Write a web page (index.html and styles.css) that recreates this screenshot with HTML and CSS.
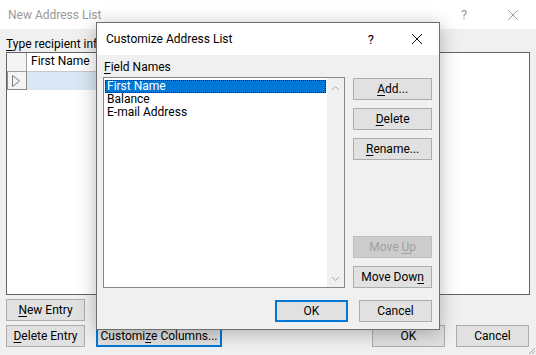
FILE: index.html
```html
<!DOCTYPE html>
<html>
<head>
<meta charset="utf-8">
<link rel="stylesheet" href="styles.css">
</head>
<body>
<div class="win">
  <div class="titlebar">
    <span class="title">New Address List</span>
    <span class="tb-help">?</span>
    <svg class="tb-close" width="12" height="12" viewBox="0 0 12 12"><path d="M1 1L11 11M11 1L1 11" stroke="#a0a0a0" stroke-width="1"/></svg>
  </div>
  <div class="content">
    <div class="label"><u>T</u>ype recipient information in the table.  To add more entries, click New Entry.</div>
    <div class="table">
      <div class="trow thead">
        <div class="rh"></div>
        <div class="cell">First Name</div>
        <div class="cell"></div>
      </div>
      <div class="trow tsel">
        <div class="rh"><svg width="10" height="14" viewBox="0 0 10 14"><path d="M1.5 1.5L8.5 7L1.5 12.5Z" fill="none" stroke="#7a7a7a" stroke-width="1"/></svg></div>
        <div class="cell"></div>
        <div class="cell"></div>
      </div>
    </div>
    <div class="bottom">
      <button class="btn b-new"><u>N</u>ew Entry</button>
      <button class="btn b-del"><u>D</u>elete Entry</button>
      <button class="btn b-cust focus">Customi<u>z</u>e Columns...</button>
      <button class="btn b-ok">OK</button>
      <button class="btn b-cancel">Cancel</button>
    </div>
  </div>
  <svg class="grip" width="10" height="10" viewBox="0 0 10 10"><path d="M9 3L3 9M9 6L6 9" stroke="#a0a0a0" stroke-width="1"/></svg>
</div>

<div class="dialog">
  <div class="dtitle">
    <span class="dt-text">Customize Address List</span>
    <span class="dt-help">?</span>
    <svg class="dt-close" width="12" height="12" viewBox="0 0 12 12"><path d="M1 1L11 11M11 1L1 11" stroke="#111" stroke-width="1"/></svg>
  </div>
  <div class="dbody">
    <div class="dlabel"><u>F</u>ield Names</div>
    <div class="dmain">
      <div class="listbox">
        <div class="items">
          <div class="item sel">First Name</div>
          <div class="item">Balance</div>
          <div class="item">E-mail Address</div>
        </div>
        <div class="vscroll">
          <svg width="9" height="6" viewBox="0 0 9 6"><path d="M1 5L4.5 1.5L8 5" fill="none" stroke="#a8a8a8" stroke-width="1"/></svg>
          <svg width="9" height="6" viewBox="0 0 9 6"><path d="M1 1L4.5 4.5L8 1" fill="none" stroke="#a8a8a8" stroke-width="1"/></svg>
        </div>
      </div>
      <div class="side">
        <button class="btn"><u>A</u>dd...</button>
        <button class="btn"><u>D</u>elete</button>
        <button class="btn"><u>R</u>ename...</button>
        <div class="spacer"></div>
        <button class="btn disabled">Move <u>U</u>p</button>
        <button class="btn">Move Dow<u>n</u></button>
      </div>
    </div>
    <div class="dfoot">
      <button class="btn focus2">OK</button>
      <button class="btn">Cancel</button>
    </div>
  </div>
</div>
</body>
</html>
```

FILE: styles.css
```css
* { box-sizing: border-box; }
html, body { margin: 0; padding: 0; }
body {
  width: 536px;
  height: 355px;
  overflow: hidden;
  background: #f0f0f0;
  font-family: Roboto, "Noto Sans", sans-serif;
  font-size: 12px;
  color: #000;
  position: relative;
}
u { text-decoration: underline; text-underline-offset: 2px; }

.win { width: 536px; height: 355px; display: flex; flex-direction: column; position: relative; }
.titlebar {
  height: 29px;
  background: #fff;
  display: flex;
  align-items: center;
  padding-left: 8px;
  flex: none;
}
.title { color: #9a9a9a; font-size: 12px; flex: 1; }
.tb-help { color: #9a9a9a; width: 12px; margin-right: 34px; font-size: 13px; }
.tb-close { margin-right: 17px; }

.content { padding: 0 6px; display: flex; flex-direction: column; flex: 1; }
.label { height: 23px; padding-top: 7px; line-height: 16px; white-space: nowrap; overflow: hidden; width: 90px; }

.table {
  height: 243px;
  border: 1px solid #646464;
  background: #fff;
  width: 524px;
}
.trow { display: flex; }
.thead { height: 19px; background: #fff; }
.thead .rh { background: #f4f4f4; border-right: 1px solid #a0a0a0; border-bottom: 1px solid #a0a0a0; }
.thead .cell { border-right: 1px solid #c8c8c8; border-bottom: 1px solid #c8c8c8; background: #fff; line-height: 17px; padding-left: 4px; }
.rh { width: 20px; flex: none; }
.cell { width: 130px; }
.tsel { height: 18px; }
.tsel .rh {
  border: 1px solid #8a8a8a;
  border-top: none;
  background: #f4f4f4;
  display: flex; align-items: center; justify-content: center;
}
.tsel .rh svg { margin-left: -2px; }
.tsel .cell { background: #dae8f5; border-right: 1px solid #d0d8e0; }

.bottom {
  display: grid;
  grid-template-columns: 79px 126px 1fr 73px 73px;
  grid-template-rows: 22px 22px;
  column-gap: 11px;
  row-gap: 4px;
  margin-top: 4px;
  width: 523px;
}
.btn {
  font-family: inherit;
  font-size: 12px;
  color: #000;
  background: #e1e1e1;
  border: 1px solid #adadad;
  padding: 0;
  height: 22px;
  line-height: 18px;
  margin: 0;
}
.b-new { grid-row: 1; grid-column: 1; }
.b-del { grid-row: 2; grid-column: 1; }
.b-cust { grid-row: 2; grid-column: 2; }
.b-ok { grid-row: 2; grid-column: 4; }
.b-cancel { grid-row: 2; grid-column: 5; }
.focus { border: 2px solid #0078d7; }
.focus2 { border: 2px solid #0078d7; }

.grip { position: absolute; right: 0; bottom: 0; }

.dialog {
  position: absolute;
  left: 96px;
  top: 22px;
  width: 344px;
  height: 308px;
  border: 1px solid #6e6e6e;
  background: #f0f0f0;
  box-shadow: 0 3px 18px rgba(0,0,0,0.28);
  display: flex;
  flex-direction: column;
}
.dtitle {
  height: 32px;
  background: #fff;
  display: flex;
  align-items: center;
  padding-left: 9px;
  flex: none;
}
.dt-text { flex: 1; }
.dt-help { font-size: 13px; margin-right: 37px; }
.dt-close { margin-right: 16px; }

.dbody { padding: 4px 7px 7px 6px; display: flex; flex-direction: column; flex: 1; }
.dlabel { height: 16px; line-height: 16px; padding-left: 1px; margin-bottom: 2px; }
.dmain { display: flex; gap: 8px; }
.listbox {
  width: 243px;
  height: 211px;
  border: 1px solid #868686;
  background: #fff;
  display: flex;
}
.items { flex: 1; padding: 2px 1px; }
.item { height: 13px; line-height: 13px; padding-left: 2px; white-space: nowrap; }
.item.sel { background: #0078d7; color: #fff; outline: 1px dotted #1a1a1a; outline-offset: -1px; }
.vscroll {
  width: 17px;
  background: #f0f0f0;
  display: flex;
  flex-direction: column;
  justify-content: space-between;
  align-items: center;
  padding: 7px 0 5px;
}
.side { display: flex; flex-direction: column; width: 79px; padding-top: 1px; }
.side .btn { margin-bottom: 8px; }
.side .spacer { flex: 1; }
.side .btn:last-child { margin-bottom: 0; }
.side .btn.disabled { background: #cccccc; border-color: #bfbfbf; color: #a0a0a0; }

.dfoot { display: flex; justify-content: flex-end; gap: 11px; margin-top: 12px; }
.dfoot .btn { width: 73px; }
```
